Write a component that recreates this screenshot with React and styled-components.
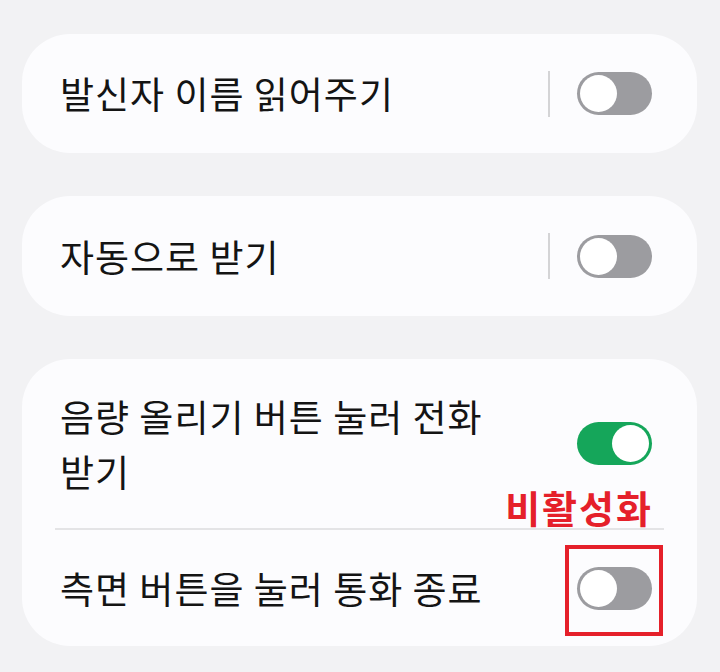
import React from "react";
import styled, { createGlobalStyle } from "styled-components";

const Global = createGlobalStyle`
  html, body { margin: 0; padding: 0; background: #f2f2f4; }
  body { font-family: "Noto Sans CJK KR", "Noto Sans", sans-serif; }
`;

const Page = styled.div`
  width: 720px;
  height: 672px;
  background: #f2f2f4;
  padding: 34px 23px 0 22px;
  box-sizing: border-box;
  display: flex;
  flex-direction: column;
  gap: 43px;
  overflow: hidden;
`;

const Card = styled.div`
  position: relative;
  background: #fcfcfe;
  border-radius: 48px;
  display: flex;
  flex-direction: column;
`;

const Row = styled.div`
  display: flex;
  align-items: center;
  min-height: ${(p) => p.$h}px;
  padding: 0 45px 0 38px;
  box-sizing: border-box;
`;

const Label = styled.div`
  flex: 1;
  font-size: 37px;
  line-height: 55px;
  color: #141414;
  letter-spacing: 1px;
`;

const VDivider = styled.div`
  width: 2px;
  height: 46px;
  background: #d4d4d6;
  margin-right: 27px;
`;

const Track = styled.div`
  width: 75px;
  height: 43px;
  border-radius: 22px;
  background: ${(p) => (p.$on ? "#15a65a" : "#9c9ca0")};
  display: flex;
  align-items: center;
  justify-content: ${(p) => (p.$on ? "flex-end" : "flex-start")};
  padding: 0 3px;
  box-sizing: border-box;
`;

const Knob = styled.div`
  width: 37px;
  height: 37px;
  border-radius: 50%;
  background: #ffffff;
`;

const HDivider = styled.div`
  height: 2px;
  background: #e4e4e6;
  margin: 0 33px 0 33px;
`;

const Annotation = styled.div`
  position: absolute;
  right: 44px;
  top: 128px;
  font-size: 38px;
  font-weight: 700;
  color: #e5202a;
  letter-spacing: 2px;
  line-height: 40px;
`;

const Highlight = styled.div`
  position: absolute;
  left: 543px;
  top: 186px;
  width: 98px;
  height: 91px;
  border: 4px solid #e5202a;
  box-sizing: border-box;
`;

function Toggle({ on }) {
  return (
    <Track $on={on}>
      <Knob />
    </Track>
  );
}

export default function App() {
  return (
    <>
      <Global />
      <Page>
        <Card>
          <Row $h={119}>
            <Label>발신자 이름 읽어주기</Label>
            <VDivider />
            <Toggle on={false} />
          </Row>
        </Card>
        <Card>
          <Row $h={120}>
            <Label>자동으로 받기</Label>
            <VDivider />
            <Toggle on={false} />
          </Row>
        </Card>
        <Card>
          <Row $h={169}>
            <Label>
              음량 올리기 버튼 눌러 전화
              <br />
              받기
            </Label>
            <Toggle on={true} />
          </Row>
          <HDivider />
          <Row $h={116}>
            <Label>측면 버튼을 눌러 통화 종료</Label>
            <Toggle on={false} />
          </Row>
          <Annotation>비활성화</Annotation>
          <Highlight />
        </Card>
      </Page>
    </>
  );
}
